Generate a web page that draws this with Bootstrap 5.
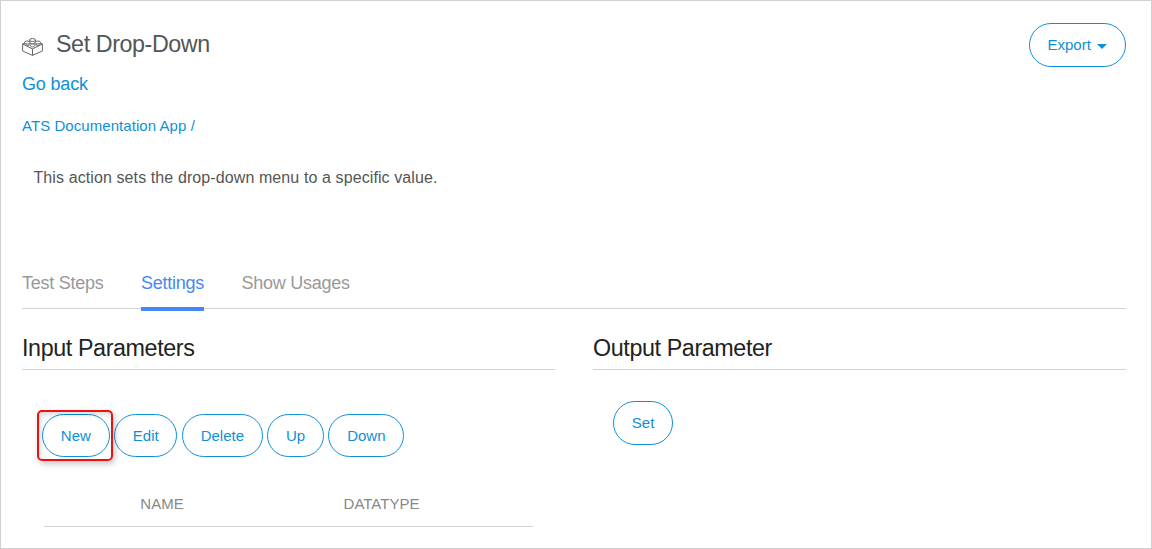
<!DOCTYPE html>
<html lang="en">
<head>
<meta charset="utf-8">
<title>Set Drop-Down</title>
<link href="https://cdn.jsdelivr.net/npm/bootstrap@5.3.0/dist/css/bootstrap.min.css" rel="stylesheet">
<style>
body{font-family:"Liberation Sans",Arial,sans-serif;font-size:15px;color:#555}
.page{height:549px;border:1px solid #d0d0d0;padding:22px 25px 0 21px;overflow:hidden}
a{color:#0e90d9;text-decoration:none}
.page-title{font-size:23.3px;letter-spacing:-.42px;line-height:28px;color:#555;margin-left:13px;margin-top:-3px}
.brick{margin-top:3px}
.back-link{font-size:18px;letter-spacing:-.18px;line-height:22px;margin-top:6px}
.crumbs{line-height:20px;margin-top:21px;letter-spacing:.06px}
.summary{font-size:16px;letter-spacing:.1px;line-height:20px;margin:32px 0 0 11.5px}
.btn-pill{--bs-btn-color:#0e90d9;--bs-btn-border-color:#0e90d9;--bs-btn-padding-x:17.8px;--bs-btn-padding-y:0;--bs-btn-font-size:15px;--bs-btn-line-height:42px;--bs-btn-border-radius:22px;--bs-btn-hover-color:#fff;--bs-btn-hover-bg:#0e90d9}
.caret{display:inline-block;border:5px solid transparent;border-top-color:#0e90d9;border-bottom:0;margin-left:6.4px;vertical-align:1px}
.main-tabs{margin-top:74px;height:47px;border-bottom:1px solid #d3d3d3;border-radius:0 4px 0 0;gap:37.4px}
.main-tabs .nav-link{padding:0;font-size:18px;letter-spacing:-.25px;line-height:42px;height:49px;color:#999}
.main-tabs .nav-link.active{color:#4688f1;border-bottom:4px solid #4688f1}
.params{display:grid;grid-template-columns:533px 533px;column-gap:38px;margin-top:25px}
.params h2{font-size:23.3px;letter-spacing:-.39px;line-height:28px;height:36px;color:#222;border-bottom:1px solid #d3d3d3;margin:0}
.actions{gap:4.4px;margin:44px 0 0 20px}
.actions-input .btn-pill{--bs-btn-line-height:41px}
.highlight{position:absolute;inset:-4px -3px -4px -5px;border:2px solid #ee1111;border-radius:5px;box-shadow:2px 3px 6px rgba(0,0,0,.22),inset 2px 3px 5px rgba(0,0,0,.14);pointer-events:none}
.columns{display:grid;grid-template-columns:236px 203px 50px;width:489px;margin:37px 0 0 22px;height:33px;line-height:20px;color:#888;text-align:center;border-bottom:1px solid #d3d3d3}
</style>
</head>
<body>
<main class="page">
  <header class="d-flex justify-content-between align-items-start">
    <div class="d-flex align-items-center" style="height:44px">
      <svg class="brick" width="21" height="18" viewBox="0 0 21 18" fill="#fff" stroke="#666" stroke-width="1" stroke-linejoin="round">
        <path d="M.6 6v7l9.9 4.4 9.9-4.4V6l-9.9 4.9zM10.5 10.9v6.5"/>
        <path d="M.6 6l2-1M20.4 6l-2-1" fill="none"/>
        <path d="M7.5 2v2.2c0 2 6 2 6 0V2"/><ellipse cx="10.5" cy="2" rx="3" ry="1.5"/>
        <path d="M2.5 4.5v1.2c0 2.2 5.4 2.2 5.4 0V4.5"/><ellipse cx="5.2" cy="4.5" rx="2.7" ry="1.5"/>
        <path d="M13.1 4.5v1.2c0 2.2 5.4 2.2 5.4 0V4.5"/><ellipse cx="15.8" cy="4.5" rx="2.7" ry="1.5"/>
        <path d="M8.2 7.4c0 2 4.6 2 4.6 0s-4.6-1.5-4.6 0z"/>
      </svg>
      <h1 class="page-title mb-0 fw-normal">Set Drop-Down</h1>
    </div>
    <button class="btn btn-pill" type="button">Export<span class="caret"></span></button>
  </header>
  <div class="back-link"><a href="#">Go back</a></div>
  <nav class="crumbs"><a href="#">ATS Documentation App /</a></nav>
  <p class="summary">This action sets the drop-down menu to a specific value.</p>
  <nav class="nav main-tabs flex-nowrap">
    <a class="nav-link" href="#">Test Steps</a>
    <a class="nav-link active" href="#">Settings</a>
    <a class="nav-link" href="#">Show Usages</a>
  </nav>
  <div class="params">
    <section>
      <h2 class="fw-normal">Input Parameters</h2>
      <div class="actions actions-input d-flex">
        <div class="position-relative"><button class="btn btn-pill" type="button">New</button><span class="highlight"></span></div>
        <button class="btn btn-pill" type="button">Edit</button>
        <button class="btn btn-pill" type="button">Delete</button>
        <button class="btn btn-pill" type="button">Up</button>
        <button class="btn btn-pill" type="button">Down</button>
      </div>
      <div class="columns"><span>NAME</span><span>DATATYPE</span></div>
    </section>
    <section>
      <h2 class="fw-normal">Output Parameter</h2>
      <div class="actions d-flex" style="margin-top:31px"><button class="btn btn-pill" type="button">Set</button></div>
    </section>
  </div>
</main>
<script src="https://cdn.jsdelivr.net/npm/bootstrap@5.3.0/dist/js/bootstrap.bundle.min.js"></script>
</body>
</html>
